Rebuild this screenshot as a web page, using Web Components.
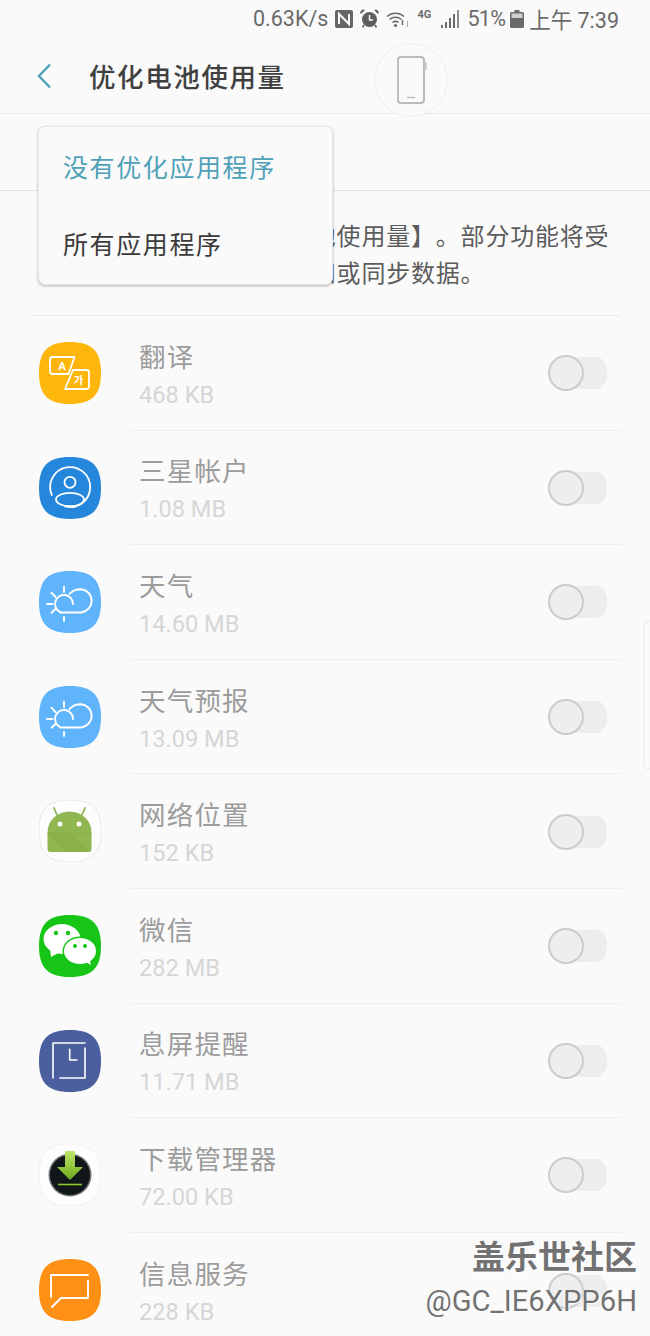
<!DOCTYPE html>
<html lang="zh-CN">
<head>
<meta charset="utf-8">
<title>优化电池使用量</title>
<style>
html, body { margin: 0; height: 1336px; overflow: hidden; background: #fafafa; }
body { font-family: Roboto, "Noto Sans CJK SC", sans-serif; }
</style>
</head>
<body>
<battery-page>
  <status-bar></status-bar>
  <title-bar>优化电池使用量</title-bar>
  <filter-bar></filter-bar>
  <intro-text>应用程序未设为【优化电池使用量】。部分功能将受到限制，例如无法接收通知或同步数据。</intro-text>
  <app-row icon="translate" name="翻译" size="468 KB"></app-row>
  <app-row icon="account" name="三星帐户" size="1.08 MB"></app-row>
  <app-row icon="weather" name="天气" size="14.60 MB"></app-row>
  <app-row icon="weather" name="天气预报" size="13.09 MB"></app-row>
  <app-row icon="android" name="网络位置" size="152 KB"></app-row>
  <app-row icon="wechat" name="微信" size="282 MB"></app-row>
  <app-row icon="clock" name="息屏提醒" size="11.71 MB"></app-row>
  <app-row icon="download" name="下载管理器" size="72.00 KB"></app-row>
  <app-row icon="message" name="信息服务" size="228 KB"></app-row>
  <pop-menu slot="over">
    <span class="on">没有优化应用程序</span>
    <span>所有应用程序</span>
  </pop-menu>
  <phone-bubble slot="over"></phone-bubble>
  <edge-handle slot="over"></edge-handle>
  <water-mark slot="over"></water-mark>
</battery-page>

<script>
const SQUIRCLE = "M31 0C53 0 62 9 62 31C62 53 53 62 31 62C9 62 0 53 0 31C0 9 9 0 31 0Z";

const ICONS = {
  translate: `
    <path fill="#ffb60c" d="${SQUIRCLE}"/>
    <g fill="none" stroke="#fff" stroke-width="1.8" stroke-linejoin="round" stroke-linecap="round">
      <path d="M35.500 15H13.500A2.500 2.500 0 0 0 11 17.500V29.500A2.500 2.500 0 0 0 13.500 32H29.500Z"/>
      <path d="M34 28H47.500A2.500 2.500 0 0 1 50 30.500V44.500A2.500 2.500 0 0 1 47.500 47H26Z"/>
    </g>
    <text x="23" y="27.500" text-anchor="middle" font-size="11.500" font-weight="700" fill="#fff" font-family="Roboto">A</text>
    <text x="39.500" y="42" text-anchor="middle" font-size="10.500" font-weight="700" fill="#fff" font-family="'Noto Sans CJK KR'">가</text>`,
  account: `
    <path fill="#2487dc" d="${SQUIRCLE}"/>
    <g fill="none" stroke="#fff" stroke-width="1.800" stroke-linecap="round">
      <path d="M12.800 38A20 20 0 1 1 26 49.400"/>
      <circle cx="31" cy="25.300" r="5.500"/>
      <ellipse cx="31" cy="42.500" rx="14" ry="6.700"/>
    </g>`,
  weather: `
    <path fill="#5fb4fb" d="${SQUIRCLE}"/>
    <g fill="none" stroke="#fff" stroke-width="1.900" stroke-linecap="round">
      <path d="M21 41.500H42A11.700 11.700 0 0 0 42 18.200C37 18.200 33 20 30.500 23"/>
      <path d="M21 41A9 9 0 1 1 34 33"/>
      <path d="M25 15.700V21M25 46V50M8 33H13.500M12.500 21.700L16.500 26M12.500 41.700L16.500 38"/>
    </g>`,
  android: `
    <path fill="#fdfdfd" stroke="#e8e8e8" stroke-width="1" d="${SQUIRCLE}"/>
    <path stroke="#8fb650" stroke-width="1.800" stroke-linecap="round" d="M18 15L15 8M43 15L46 8"/>
    <path fill="#8fb650" d="M8.500 32A22 20.500 0 0 1 52.500 32Z"/>
    <path fill="#8fb650" d="M8.500 32H52.500V49A3 3 0 0 1 49.500 52H11.500A3 3 0 0 1 8.500 49Z"/>
    <path fill="#8aaf4b" d="M8.500 32.500H52.500V33.500H32L50 52H28L8.500 33.500Z"/>
    <circle cx="21" cy="24" r="2.500" fill="#fff"/>
    <circle cx="40" cy="24" r="2.500" fill="#fff"/>`,
  wechat: `
    <path fill="#17c517" d="${SQUIRCLE}"/>
    <ellipse cx="23" cy="24" rx="18.500" ry="15" fill="#fff"/>
    <path fill="#fff" d="M11 33L12 42L21 37Z"/>
    <circle cx="17" cy="18" r="2.200" fill="#17c517"/>
    <circle cx="29" cy="18" r="2.200" fill="#17c517"/>
    <ellipse cx="41" cy="36" rx="17.500" ry="14.500" fill="#17c517"/>
    <ellipse cx="41" cy="36" rx="16" ry="13" fill="#fff"/>
    <path fill="#fff" d="M45 46L52 50L50 42Z"/>
    <circle cx="36" cy="31" r="2" fill="#17c517"/>
    <circle cx="46" cy="31" r="2" fill="#17c517"/>`,
  clock: `
    <path fill="#4b5e9e" d="${SQUIRCLE}"/>
    <path fill="none" stroke="#fff" stroke-width="1.600" stroke-linecap="round" stroke-linejoin="round"
      d="M14 48V13H46M46 18V48H21M30.700 19.300V30H38"/>`,
  download: `
    <defs><linearGradient id="arrow" x1="0" y1="0" x2="0" y2="1">
      <stop offset="0" stop-color="#bfe667"/><stop offset="1" stop-color="#6ea81e"/>
    </linearGradient></defs>
    <path fill="#fdfdfd" stroke="#efefef" stroke-width="1" d="${SQUIRCLE}"/>
    <circle cx="31" cy="31" r="21.500" fill="#6f7472"/>
    <circle cx="31" cy="31" r="20" fill="#10161a"/>
    <path fill="url(#arrow)" d="M26 7H36V23H44L31 36L18 23H26Z"/>
    <path stroke="#8bc926" stroke-width="1.600" d="M19 40.500H43"/>`,
  message: `
    <path fill="#fe9016" d="${SQUIRCLE}"/>
    <path fill="none" stroke="#fff" stroke-width="1.900" stroke-linecap="round" stroke-linejoin="round"
      d="M12 38V16H49M49 22V39H22L13 48"/>`
};

const statusTpl = document.createElement("template");
statusTpl.innerHTML = `
<style>
:host { display: flex; height: 40px; box-sizing: border-box; padding: 0 31px 3px 0; justify-content: flex-end; align-items: center; color: #6a6a6a; font-size: 21.500px; }
svg { display: block; flex: none; }
.speed { margin-right: 7px; }
.pct { margin: 0 5px 0 8px; letter-spacing: -0.700px; }
.time { margin-left: 5px; }
.tag { font-size: 11px; font-weight: 700; width: 16px; margin: 0 8px 9px 7px; line-height: 11px; }
.nfc { margin-right: 7px; }
.alarm { margin-right: 7px; }
</style>
<span class="speed">0.63K/s</span>
<svg class="nfc" width="18" height="18" viewBox="0 0 18 18">
  <rect width="18" height="18" rx="2" fill="#666"/>
  <path fill="none" stroke="#fafafa" stroke-width="2" d="M4 14V4L14 14V4"/>
</svg>
<svg class="alarm" width="19" height="19" viewBox="0 0 19 19">
  <circle cx="9.500" cy="10.500" r="7.500" fill="#5e5e5e"/>
  <path fill="none" stroke="#fafafa" stroke-width="1.400" d="M9.500 6V11H13"/>
  <path fill="#5e5e5e" d="M1 5L5 1L2.500 0.500L0 3ZM18 5L14 1L16.500 0.500L19 3Z"/>
  <path stroke="#5e5e5e" stroke-width="1.500" d="M4 16L2.500 18.500M15 16L16.500 18.500"/>
</svg>
<svg width="24" height="18" viewBox="0 0 24 18">
  <g fill="none" stroke="#6a6a6a" stroke-width="1.500">
    <path d="M1 6.500A13 13 0 0 1 18 6.500"/>
    <path d="M3.500 9.500A9.500 9.500 0 0 1 15.500 9.500"/>
    <path d="M6.500 12.500A5 5 0 0 1 12.500 12.500"/>
  </g>
  <circle cx="9.500" cy="15.500" r="1.600" fill="#6a6a6a"/>
  <path stroke="#6a6a6a" stroke-width="1.500" d="M16.500 10V15"/>
  <path stroke="#aaa" d="M21.500 17V11"/>
</svg>
<span class="tag">4G</span>
<svg width="18" height="19" viewBox="0 0 18 19">
  <g fill="#6a6a6a">
    <rect x="0" y="16" width="2" height="3"/>
    <rect x="4" y="13" width="2" height="6"/>
    <rect x="8" y="9" width="2" height="10"/>
    <rect x="12" y="5" width="2" height="14" />
    <rect x="16" y="1" width="2" height="18" fill="#8d8d8d"/>
  </g>
</svg>
<span class="pct">51%</span>
<svg width="14" height="18" viewBox="0 0 14 18">
  <path fill="#6a6a6a" d="M4.500 0H9.500V2H12.500A1.500 1.500 0 0 1 14 3.500V16.500A1.500 1.500 0 0 1 12.500 18H1.500A1.500 1.500 0 0 1 0 16.500V3.500A1.500 1.500 0 0 1 1.500 2H4.500Z"/>
  <rect x="1.500" y="3.500" width="11" height="4.500" fill="#cfcfcf"/>
</svg>
<span class="time">上午 7:39</span>
`;

class StatusBar extends HTMLElement {
  constructor() {
    super();
    this.attachShadow({ mode: "open" });
    this.shadowRoot.appendChild(statusTpl.content.cloneNode(true));
  }
}

const titleTpl = document.createElement("template");
titleTpl.innerHTML = `
<style>
:host { display: flex; align-items: center; height: 74px; padding: 0 0 0 37px; border-bottom: 1px solid #e9e9e9; box-sizing: border-box; }
svg { display: block; flex: none; margin-right: 38px; margin-top: -2px; }
.title { font-size: 26.500px; letter-spacing: 1.600px; font-weight: 500; color: #404040; margin-top: -3px; }
</style>
<svg width="14" height="26" viewBox="0 0 14 26"><path fill="none" stroke="#4c9fb6" stroke-width="2.400" d="M13 1.500L2 13L13 24.500"/></svg>
<span class="title"><slot></slot></span>
`;

class TitleBar extends HTMLElement {
  constructor() {
    super();
    this.attachShadow({ mode: "open" });
    this.shadowRoot.appendChild(titleTpl.content.cloneNode(true));
  }
}

class FilterBar extends HTMLElement {
  constructor() {
    super();
    this.attachShadow({ mode: "open" });
    this.shadowRoot.innerHTML = `<style>:host { display: block; height: 77px; box-sizing: border-box; border-bottom: 1px solid #e4e4e4; }</style>`;
  }
}

const introTpl = document.createElement("template");
introTpl.innerHTML = `
<style>
:host { display: block; height: 125px; margin: 0 29px 0 30px; padding: 27.500px 0 0 9px; box-sizing: border-box; border-bottom: 1px solid #ececec; font-size: 24px; letter-spacing: 0.800px; line-height: 37px; color: #5c5c5c; text-spacing-trim: space-all; }
</style>
<slot></slot>
`;

class IntroText extends HTMLElement {
  constructor() {
    super();
    this.attachShadow({ mode: "open" });
    this.shadowRoot.appendChild(introTpl.content.cloneNode(true));
  }
}

const rowTpl = document.createElement("template");
rowTpl.innerHTML = `
<style>
:host { display: flex; height: 114.600px; padding-left: 39px; padding-right: 29px; box-sizing: border-box; }
.icon { flex: none; width: 62px; height: 62px; margin: 26px 29px 0 0; display: block; }
.main { flex: 1; display: flex; align-items: center; justify-content: space-between; padding: 0 14px 0 9px; border-bottom: 1px solid #efefef; }
:host(:last-of-type) .main { border-bottom: 0; }
.name { font-size: 26.500px; letter-spacing: 1.200px; line-height: 36px; color: #9c9c9c; }
.size { font-size: 23.600px; line-height: 32px; color: #d6d6d6; margin-top: 3px; }
.text { margin-top: 5px; }
</style>
<svg class="icon" viewBox="0 0 62 62"></svg>
<div class="main">
  <div class="text">
    <div class="name"></div>
    <div class="size"></div>
  </div>
  <off-switch></off-switch>
</div>
`;

class AppRow extends HTMLElement {
  constructor() {
    super();
    this.attachShadow({ mode: "open" });
    this.shadowRoot.appendChild(rowTpl.content.cloneNode(true));
    this.shadowRoot.querySelector(".icon").innerHTML = ICONS[this.getAttribute("icon")];
    this.shadowRoot.querySelector(".name").innerText = this.getAttribute("name");
    this.shadowRoot.querySelector(".size").innerText = this.getAttribute("size");
  }
}

class OffSwitch extends HTMLElement {
  constructor() {
    super();
    this.attachShadow({ mode: "open" });
    this.shadowRoot.innerHTML = `
<style>
:host { display: flex; align-items: center; width: 59px; height: 36px; background: linear-gradient(#ededed, #ededed) right center / 44px 32px no-repeat; border-radius: 16px; margin-top: 1px; }
.knob { width: 36px; height: 36px; box-sizing: border-box; border-radius: 50%; background: #eeeeee; border: 2px solid #cccccc; }
</style>
<div class="knob"></div>`;
  }
}

const menuTpl = document.createElement("template");
menuTpl.innerHTML = `
<style>
:host { position: absolute; left: 38px; top: 126px; width: 295px; height: 159px; background: #fafafa; border-radius: 7px; border: 1px solid #e6e6e6; box-sizing: border-box; box-shadow: 0 1px 3px rgba(0,0,0,.28); display: flex; flex-direction: column; padding: 0 0 2px 24px; font-size: 25px; letter-spacing: 1.600px; color: #3a3a3a; }
::slotted(span) { height: 78px; display: flex; align-items: center; }
::slotted(.on) { color: #4fa1b8; }
</style>
<slot></slot>
`;

class PopMenu extends HTMLElement {
  constructor() {
    super();
    this.attachShadow({ mode: "open" });
    this.shadowRoot.appendChild(menuTpl.content.cloneNode(true));
  }
}

class PhoneBubble extends HTMLElement {
  constructor() {
    super();
    this.attachShadow({ mode: "open" });
    this.shadowRoot.innerHTML = `
<style>
:host { position: absolute; left: 374px; top: 43px; width: 74px; height: 74px; box-sizing: border-box; border-radius: 50%; border: 1.500px solid #eeeeee; background: #fafafa; display: flex; align-items: center; justify-content: center; }
svg { display: block; margin-left: 2px; }
</style>
<svg width="30" height="48" viewBox="0 0 30 48">
  <rect x="1" y="1" width="26" height="46" rx="3" fill="none" stroke="#bcbcbc" stroke-width="2"/>
  <rect x="27" y="6" width="2.500" height="8" fill="#c4c4c4"/>
  <path stroke="#bcbcbc" stroke-width="1.500" d="M10 41.500H18"/>
</svg>`;
  }
}

class EdgeHandle extends HTMLElement {
  constructor() {
    super();
    this.attachShadow({ mode: "open" });
    this.shadowRoot.innerHTML = `<style>:host { position: absolute; right: 0; top: 620px; width: 7px; height: 150px; box-sizing: border-box; border: 2px solid #f1f1f1; border-right: 0; border-radius: 6px 0 0 6px; }</style>`;
  }
}

const markTpl = document.createElement("template");
markTpl.innerHTML = `
<style>
:host { position: absolute; right: 13px; top: 1237px; text-align: right; color: #727272; text-shadow: 1px 1px 0 #fff, -1px 0 0 #fff; }
.brand { font-size: 33px; font-weight: 700; line-height: 42px; }
.user { font-size: 29.200px; line-height: 40px; margin-top: 2px; }
</style>
<div class="brand">盖乐世社区</div>
<div class="user">@GC_IE6XPP6H</div>
`;

class WaterMark extends HTMLElement {
  constructor() {
    super();
    this.attachShadow({ mode: "open" });
    this.shadowRoot.appendChild(markTpl.content.cloneNode(true));
  }
}

const pageTpl = document.createElement("template");
pageTpl.innerHTML = `
<style>
:host { display: block; position: relative; width: 650px; height: 1336px; overflow: hidden; background: #fafafa; }
</style>
<slot></slot>
<slot name="over"></slot>
`;

class BatteryPage extends HTMLElement {
  constructor() {
    super();
    this.attachShadow({ mode: "open" });
    this.shadowRoot.appendChild(pageTpl.content.cloneNode(true));
  }
}

customElements.define("status-bar", StatusBar);
customElements.define("title-bar", TitleBar);
customElements.define("filter-bar", FilterBar);
customElements.define("intro-text", IntroText);
customElements.define("off-switch", OffSwitch);
customElements.define("app-row", AppRow);
customElements.define("pop-menu", PopMenu);
customElements.define("phone-bubble", PhoneBubble);
customElements.define("edge-handle", EdgeHandle);
customElements.define("water-mark", WaterMark);
customElements.define("battery-page", BatteryPage);
</script>
</body>
</html>
